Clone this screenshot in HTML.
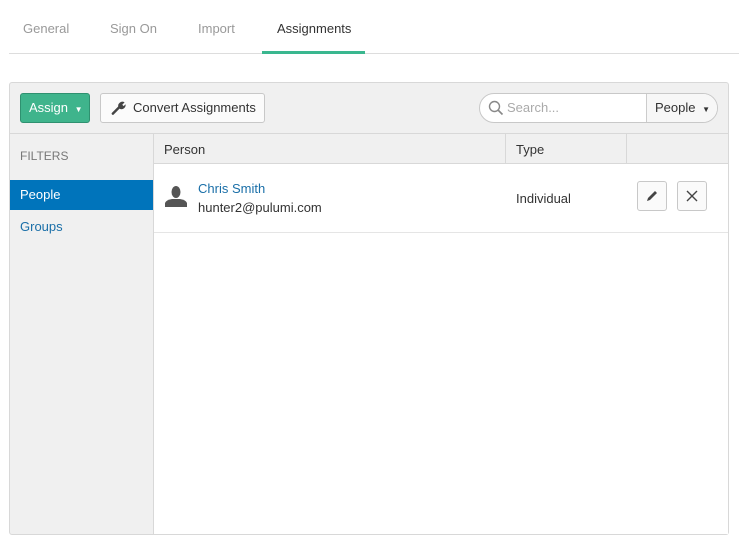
<!DOCTYPE html>
<html><head><style>
*{box-sizing:border-box;margin:0;padding:0}
body{width:739px;height:550px;background:#fff;font-family:"Liberation Sans",sans-serif;font-size:13px;color:#333;position:relative;overflow:hidden}
.a{position:absolute}
.tab{position:absolute;top:21px;font-size:13px;color:#999}
</style></head><body>
<div class="tab" style="left:23px">General</div>
<div class="tab" style="left:110px">Sign On</div>
<div class="tab" style="left:198px">Import</div>
<div class="tab" style="left:277px;color:#333">Assignments</div>
<div class="a" style="left:9px;top:53px;width:730px;height:1px;background:#ddd"></div>
<div class="a" style="left:262px;top:51px;width:103px;height:3px;background:#3ab78f"></div>

<div class="a" style="left:9px;top:82px;width:720px;height:453px;border:1px solid #d8d8d8;border-radius:3px;background:#f0f0f0"></div>
<div class="a" style="left:9px;top:133px;width:720px;height:1px;background:#d8d8d8"></div>
<!-- Assign -->
<div class="a" style="left:20px;top:93px;width:70px;height:30px;background:#3fb48c;border:1px solid #2f9170;border-radius:3px;color:#fff;font-size:13px;line-height:28px;padding-left:8px">Assign <span style="font-size:8px;margin-left:3px">&#9660;</span></div>
<div class="a" style="left:100px;top:93px;width:165px;height:30px;background:#fbfbfb;border:1px solid #c8c8c8;border-radius:3px;line-height:28px;padding-left:32px;color:#333">Convert Assignments</div>
<svg class="a" style="left:111px;top:100px" width="15" height="15" viewBox="0 0 16 16"><path d="M2 14.5 L9 7.5" stroke="#444" stroke-width="2.6" stroke-linecap="round"/><path d="M8 8 A4.5 4.5 0 0 1 14.5 2.5 L12 5 L13.5 6.5 L15.5 4.5 A4.5 4.5 0 0 1 9.5 9.5Z" fill="#444"/></svg>
<!-- search -->
<div class="a" style="left:479px;top:93px;width:239px;height:30px;background:#fff;border:1px solid #c8c8c8;border-radius:15px"></div>
<div class="a" style="left:646px;top:94px;width:1px;height:28px;background:#ccc"></div>
<div class="a" style="left:647px;top:94px;width:70px;height:28px;background:#f7f7f7;border-radius:0 14px 14px 0"></div>
<svg class="a" style="left:488px;top:100px" width="16" height="16" viewBox="0 0 16 16"><circle cx="6.5" cy="6.5" r="5" fill="none" stroke="#888" stroke-width="1.4"/><path d="M10 10 L14.5 14.5" stroke="#888" stroke-width="1.6"/></svg>
<div class="a" style="left:507px;top:100px;color:#aaa">Search...</div>
<div class="a" style="left:655px;top:100px;color:#333">People <span style="font-size:8px;margin-left:3px">&#9660;</span></div>
<!-- sidebar -->
<div class="a" style="left:153px;top:134px;width:1px;height:400px;background:#d8d8d8"></div>
<div class="a" style="left:20px;top:149px;color:#777;font-size:12px">FILTERS</div>
<div class="a" style="left:10px;top:180px;width:143px;height:30px;background:#0074bb;color:#fff;line-height:30px;padding-left:10px">People</div>
<div class="a" style="left:20px;top:219px;color:#1a6fa8">Groups</div>
<!-- table -->
<div class="a" style="left:154px;top:134px;width:574px;height:400px;background:#fff"></div>
<div class="a" style="left:154px;top:134px;width:574px;height:30px;background:#f0f0f0;border-bottom:1px solid #d8d8d8"></div>
<div class="a" style="left:505px;top:134px;width:1px;height:30px;background:#d8d8d8"></div>
<div class="a" style="left:626px;top:134px;width:1px;height:30px;background:#d8d8d8"></div>
<div class="a" style="left:164px;top:142px;color:#333">Person</div>
<div class="a" style="left:516px;top:142px;color:#333">Type</div>
<div class="a" style="left:154px;top:232px;width:574px;height:1px;background:#e5e5e5"></div>
<svg class="a" style="left:165px;top:185px" width="22" height="22" viewBox="0 0 22 22"><ellipse cx="11" cy="7" rx="4.5" ry="6" fill="#555"/><path d="M0 22 L0 18 Q1 15 7 14 L15 14 Q21 15 22 18 L22 22Z" fill="#555"/></svg>
<div class="a" style="left:198px;top:181px;color:#1a6fa8">Chris Smith</div>
<div class="a" style="left:198px;top:200px;color:#333">hunter2@pulumi.com</div>
<div class="a" style="left:516px;top:191px;color:#333">Individual</div>
<div class="a" style="left:637px;top:181px;width:30px;height:30px;border:1px solid #c8c8c8;border-radius:3px;background:#fafafa"></div>
<svg class="a" style="left:645px;top:189px" width="14" height="14" viewBox="0 0 14 14"><path d="M2 12 L3 9 L10 2 L12 4 L5 11Z" fill="#444"/></svg>
<div class="a" style="left:677px;top:181px;width:30px;height:30px;border:1px solid #c8c8c8;border-radius:3px;background:#fafafa"></div>
<svg class="a" style="left:686px;top:190px" width="12" height="12" viewBox="0 0 12 12"><path d="M1 1 L11 11 M11 1 L1 11" stroke="#444" stroke-width="1.4"/></svg>
</body></html>
